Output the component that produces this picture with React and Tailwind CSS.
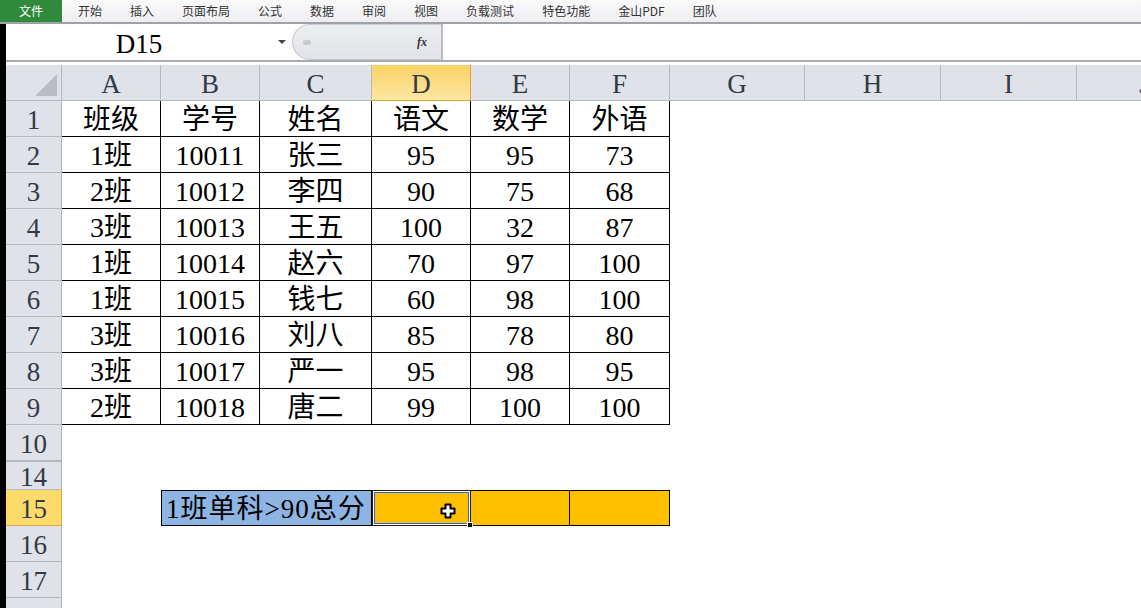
import React from "react";

const tabs = ["开始", "插入", "页面布局", "公式", "数据", "审阅", "视图", "负载测试", "特色功能", "金山PDF", "团队"];

const cols = [
  { k: "A", w: "w-[99px]" },
  { k: "B", w: "w-[99px]" },
  { k: "C", w: "w-[112px]" },
  { k: "D", w: "w-[99px]" },
  { k: "E", w: "w-[99px]" },
  { k: "F", w: "w-[100px]" },
  { k: "G", w: "w-[135px]" },
  { k: "H", w: "w-[136px]" },
  { k: "I", w: "w-[136px]" },
  { k: "J", w: "w-[136px]" },
];

const data = [
  ["班级", "学号", "姓名", "语文", "数学", "外语"],
  ["1班", "10011", "张三", "95", "95", "73"],
  ["2班", "10012", "李四", "90", "75", "68"],
  ["3班", "10013", "王五", "100", "32", "87"],
  ["1班", "10014", "赵六", "70", "97", "100"],
  ["1班", "10015", "钱七", "60", "98", "100"],
  ["3班", "10016", "刘八", "85", "78", "80"],
  ["3班", "10017", "严一", "95", "98", "95"],
  ["2班", "10018", "唐二", "99", "100", "100"],
];

function RowHead({ n, h = "h-[36px]", active, thick }) {
  return (
    <div
      className={`w-[56px] shrink-0 ${h} flex items-center justify-center pt-[3px] text-[27px] text-[#333a45] border-r ${
        thick ? "border-b-2" : "border-b"
      } ${active ? "bg-[#fddb6a] border-[#e3a53e]" : "bg-[#dfe2e8] border-[#b3b7be]"}`}
    >
      {n}
    </div>
  );
}

function Cursor() {
  return (
    <svg className="absolute left-[67px] top-[12px]" width="16" height="16" viewBox="0 0 16 16">
      <path
        d="M5.5 1.5h5v4h4v5h-4v4h-5v-4h-4v-5h4z"
        fill="#fff"
        stroke="#000"
        strokeWidth="2"
        strokeLinejoin="round"
      />
    </svg>
  );
}

export default function App() {
  return (
    <div className="w-[1141px] h-[608px] overflow-hidden bg-white flex flex-col font-['Liberation_Serif','Noto_Sans_CJK_SC',serif]">
      {/* ribbon tabs */}
      <div className="h-[24px] shrink-0 flex items-stretch bg-gradient-to-b from-[#fafafb] to-[#eeedf1] border-b-2 border-[#9ea1a7] font-['Noto_Sans_CJK_SC',sans-serif] text-[12px] text-[#333]">
        <div className="w-[62px] bg-[#2f8a3c] text-white flex items-center justify-center">文件</div>
        <div className="flex items-center ml-[2px]">
          {tabs.map((t) => (
            <span key={t} className="px-[14px] leading-none">
              {t}
            </span>
          ))}
        </div>
      </div>

      <div className="flex flex-1 min-h-0">
        <div className="w-[6px] shrink-0 bg-black" />
        <div className="flex-1 flex flex-col min-w-0">
          {/* formula bar */}
          <div className="h-[38px] shrink-0 flex border-b-2 border-[#a7aab0]">
            <div className="w-[286px] shrink-0 flex items-center relative">
              <span className="flex-1 text-center text-[27px] leading-none pt-[4px] text-black pr-[6px]">D15</span>
              <span className="w-0 h-0 border-l-[4px] border-r-[4px] border-t-[4px] border-l-transparent border-r-transparent border-t-[#444] mr-[6px]" />
            </div>
            <div className="w-[149px] shrink-0 rounded-l-full bg-gradient-to-b from-[#eceef2] to-[#e1e3e8] border border-r-0 border-[#c9cbd1] flex items-center justify-between pl-[10px] pr-[14px]">
              <span className="w-[8px] h-[5px] rounded-full bg-[#c9cacf]" />
              <span className="italic font-bold text-[12px] text-[#333]">fx</span>
            </div>
            <div className="flex-1 border-l-2 border-[#b9bcc2] bg-white" />
          </div>
          <div className="h-[3px] shrink-0 bg-white" />

          {/* column headers */}
          <div className="h-[36px] shrink-0 flex">
            <div className="w-[56px] shrink-0 bg-[#dfe2e8] border-r border-b border-[#b3b7be] relative">
              <div className="absolute right-[4px] bottom-[4px] w-[22px] h-[22px] bg-[#b8bcc3] [clip-path:polygon(100%_0,100%_100%,0_100%)]" />
            </div>
            {cols.map((c) => (
              <div
                key={c.k}
                className={`${c.w} shrink-0 flex items-center justify-center pt-[3px] text-[27px] text-[#333a45] border-r border-b ${
                  c.k === "D"
                    ? "bg-gradient-to-b from-[#f8d264] to-[#fde6a0] border-[#e0a23a]"
                    : "bg-[#dfe2e8] border-[#b3b7be]"
                }`}
              >
                {c.k}
              </div>
            ))}
          </div>

          {/* data rows */}
          {data.map((r, i) => (
            <div key={i} className="h-[36px] shrink-0 flex">
              <RowHead n={i + 1} />
              {r.map((v, j) => (
                <div
                  key={j}
                  className={`${cols[j].w} shrink-0 flex items-center justify-center pt-[3px] text-[28px] text-black border-r border-b border-black`}
                >
                  {v}
                </div>
              ))}
            </div>
          ))}

          <div className="h-[37px] shrink-0 flex">
            <RowHead n={10} h="h-[37px]" thick />
          </div>
          <div className="h-[28px] shrink-0 flex">
            <RowHead n={14} h="h-[28px]" />
          </div>

          {/* row 15 */}
          <div className="h-[36px] shrink-0 flex">
            <RowHead n={15} active />
            <div className="w-[99px] shrink-0" />
            <div className="w-[211px] shrink-0 bg-[#8db4e2] border border-black flex items-center pl-[4px] pt-[3px] text-[27px] tracking-[1px] text-black whitespace-nowrap">
              1班单科&gt;90总分
            </div>
            <div className="w-[99px] shrink-0 relative bg-[#ffc000] border border-[#222] shadow-[inset_0_0_0_1px_#fff,inset_0_0_0_2px_#2b63e6]">
              <Cursor />
              <div className="absolute -right-[3px] -bottom-[3px] w-[6px] h-[6px] bg-black border border-white" />
            </div>
            <div className="w-[99px] shrink-0 bg-[#ffc000] border-y border-r border-black" />
            <div className="w-[100px] shrink-0 bg-[#ffc000] border-y border-r border-black" />
          </div>

          {[16, 17].map((n) => (
            <div key={n} className="h-[36px] shrink-0 flex">
              <RowHead n={n} />
            </div>
          ))}
          <div className="h-[36px] shrink-0 flex">
            <RowHead n="" />
          </div>
        </div>
      </div>
    </div>
  );
}
